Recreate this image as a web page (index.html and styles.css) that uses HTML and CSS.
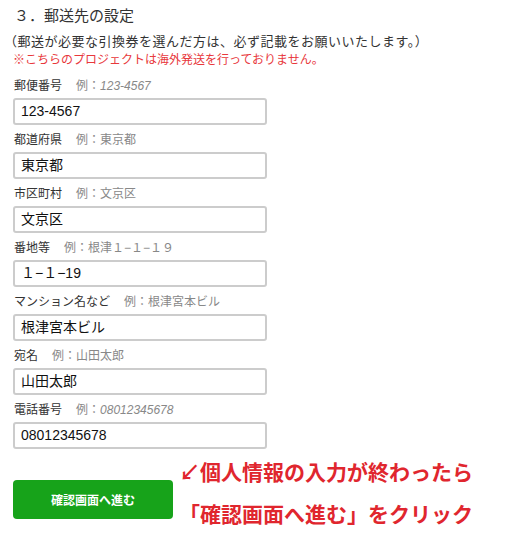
FILE: index.html
```html
<!DOCTYPE html>
<html lang="ja">
<head>
<meta charset="utf-8">
<link rel="stylesheet" href="styles.css">
</head>
<body>
<div class="page">
  <h3 class="title">３．郵送先の設定</h3>
  <p class="note">（郵送が必要な引換券を選んだ方は、必ず記載をお願いいたします。）</p>
  <p class="warn">※こちらのプロジェクトは海外発送を行っておりません。</p>

  <div class="field">
    <label class="label">郵便番号<span class="ex">例：<i>123-4567</i></span></label>
    <div class="input">123-4567</div>
  </div>
  <div class="field">
    <label class="label">都道府県<span class="ex">例：東京都</span></label>
    <div class="input">東京都</div>
  </div>
  <div class="field">
    <label class="label">市区町村<span class="ex">例：文京区</span></label>
    <div class="input">文京区</div>
  </div>
  <div class="field">
    <label class="label">番地等<span class="ex">例：根津１−１−１９</span></label>
    <div class="input">１−１−19</div>
  </div>
  <div class="field">
    <label class="label">マンション名など<span class="ex">例：根津宮本ビル</span></label>
    <div class="input">根津宮本ビル</div>
  </div>
  <div class="field">
    <label class="label">宛名<span class="ex">例：山田太郎</span></label>
    <div class="input">山田太郎</div>
  </div>
  <div class="field">
    <label class="label">電話番号<span class="ex">例：<i>08012345678</i></span></label>
    <div class="input">08012345678</div>
  </div>

  <div class="actions">
    <button class="btn">確認画面へ進む</button>
    <div class="hint">
      <div class="hint-line">↙個人情報の入力が終わったら</div>
      <div class="hint-line">「確認画面へ進む」をクリック</div>
    </div>
  </div>
</div>
</body>
</html>
```

FILE: styles.css
```css
html, body {
  margin: 0;
  padding: 0;
  background: #ffffff;
}
body {
  font-family: "Liberation Sans", "Noto Sans CJK JP", sans-serif;
  color: #333333;
}
.page {
  padding: 6px 13px 0 13px;
}
.title {
  margin: 0;
  font-size: 15px;
  font-weight: normal;
  line-height: 20px;
  color: #333333;
  padding-left: 1px;
}
.note {
  margin: 7px 0 0 -9px;
  font-size: 13px;
  line-height: 18px;
  letter-spacing: 0.5px;
  color: #333333;
}
.warn {
  margin: 0;
  font-size: 12px;
  line-height: 18px;
  color: #e8383c;
}
.field {
  display: flex;
  flex-direction: column;
  width: 254px;
  margin-bottom: 5px;
}
.field:first-of-type {
  margin-top: 7px;
}
.label {
  display: block;
  font-size: 12px;
  line-height: 20px;
  color: #333333;
  margin-bottom: 2px;
  padding-left: 1px;
}
.ex {
  margin-left: 14px;
  color: #888888;
}
.ex i {
  font-style: italic;
}
.input {
  box-sizing: border-box;
  height: 27px;
  border: 2px solid #cccccc;
  border-radius: 3px;
  padding: 0 6px;
  font-size: 14px;
  line-height: 23px;
  color: #111111;
}
.actions {
  display: flex;
  align-items: flex-start;
  margin-top: -4px;
}
.btn {
  margin-top: 30px;
  width: 160px;
  height: 39px;
  border: none;
  border-radius: 4px;
  background: #17a31a;
  color: #ffffff;
  font-family: "Noto Sans CJK JP", sans-serif;
  font-size: 12px;
  font-weight: bold;
  cursor: pointer;
}
.hint {
  margin-left: 6px;
  display: flex;
  flex-direction: column;
}
.hint-line {
  font-family: "Noto Sans CJK JP", sans-serif;
  font-size: 21px;
  font-weight: bold;
  line-height: 42px;
  color: #e0262e;
  white-space: nowrap;
}
```
